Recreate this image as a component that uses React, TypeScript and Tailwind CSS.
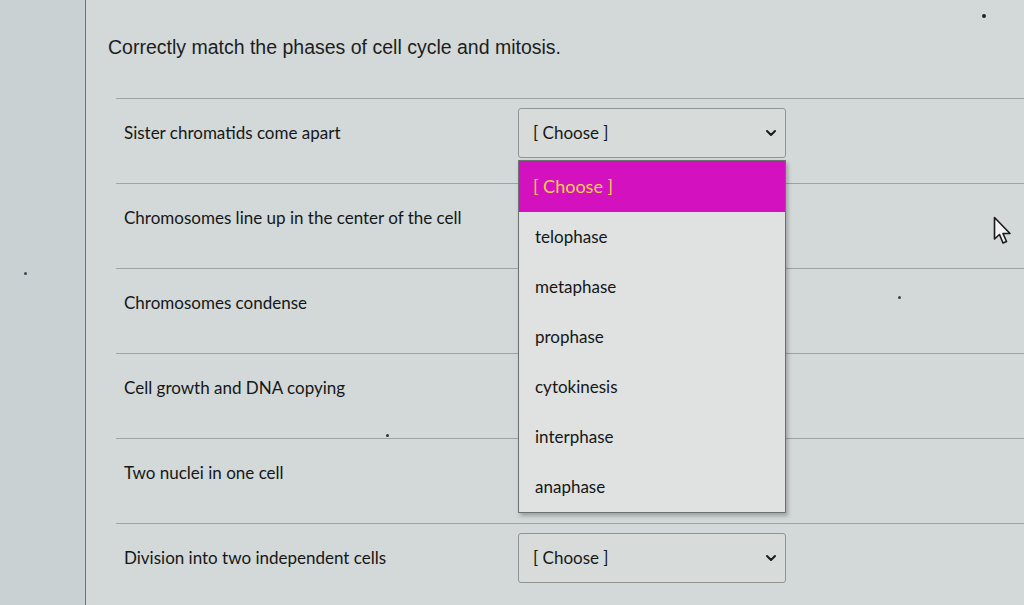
import React from "react";
import { ChevronDown } from "lucide-react";

const prompts = [
  "Sister chromatids come apart",
  "Chromosomes line up in the center of the cell",
  "Chromosomes condense",
  "Cell growth and DNA copying",
  "Two nuclei in one cell",
  "Division into two independent cells",
];

const options = ["telophase", "metaphase", "prophase", "cytokinesis", "interphase", "anaphase"];

function Select({ open = false }: { open?: boolean }) {
  return (
    <div className="relative w-[268px] h-[50px] shrink-0">
      <div className="h-full w-full flex items-center justify-between pl-[14px] pr-[6px] border border-[#8e9393] rounded-[3px] bg-[#d7dcdb] text-[17px] text-[#151717]">
        <span>[ Choose ]</span>
        <ChevronDown size={16} strokeWidth={3} className="text-[#1a1a1a]" />
      </div>
      {open && (
        <div className="absolute top-[52px] left-0 w-full z-10 bg-[#dfe2e1] border border-[#6b7070] shadow-[2px_3px_4px_rgba(0,0,0,0.25)] text-[17px]">
          <div className="h-[51px] flex items-center pl-[14px] bg-[#d411bf] text-[#f4d04a] text-[18px]">
            [ Choose ]
          </div>
          {options.map((o) => (
            <div key={o} className="h-[50px] flex items-center pl-[16px] text-[#151616]">
              {o}
            </div>
          ))}
        </div>
      )}
    </div>
  );
}

export default function App() {
  return (
    <div
      className="relative flex w-[1024px] h-[605px] overflow-hidden bg-[#d3d8d8]"
      style={{ fontFamily: "Lato, 'Open Sans', sans-serif" }}
    >
      {/* left page margin */}
      <div className="w-[86px] shrink-0 bg-[#c9d1d3] border-r border-[#6d7272]" />

      <div className="flex-1 pl-[22px]">
        <h1
          className="pt-[34px] text-[19.5px] leading-[26px] text-[#1c1e1e]"
          style={{ fontFamily: "'Liberation Sans', Arial, sans-serif" }}
        >
          Correctly match the phases of cell cycle and mitosis.
        </h1>

        <div className="mt-[38px] ml-[8px] border-t border-[#9ea4a4]">
          {prompts.map((p, i) => (
            <div
              key={p}
              className={`h-[85px] flex items-start pt-[9px] ${
                i < prompts.length - 1 ? "border-b border-[#9ea4a4]" : ""
              }`}
            >
              <div className="w-[402px] h-[50px] pl-[8px] flex items-center text-[17px] text-[#151717]">
                {p}
              </div>
              {i === 0 && <Select open />}
              {i === prompts.length - 1 && <Select />}
            </div>
          ))}
        </div>
      </div>

      {/* mouse pointer */}
      <svg
        className="absolute left-[993px] top-[216px]"
        width="22"
        height="30"
        viewBox="0 0 22 30"
      >
        <path
          d="M1.5 1.5 L1.5 23 L6.5 18.5 L10 27 L13.5 25.5 L10 17.5 L17 17.5 Z"
          fill="#f2f2f2"
          stroke="#1a1a1a"
          strokeWidth="1.6"
          strokeLinejoin="round"
        />
      </svg>

      {/* specks on the screen */}
      <div className="absolute left-[982px] top-[14px] w-[4px] h-[4px] rounded-full bg-[#222]" />
      <div className="absolute left-[898px] top-[296px] w-[3px] h-[3px] rounded-full bg-[#444]" />
      <div className="absolute left-[386px] top-[434px] w-[3px] h-[3px] rounded-full bg-[#333]" />
      <div className="absolute left-[24px] top-[272px] w-[3px] h-[3px] rounded-full bg-[#445]" />
    </div>
  );
}
